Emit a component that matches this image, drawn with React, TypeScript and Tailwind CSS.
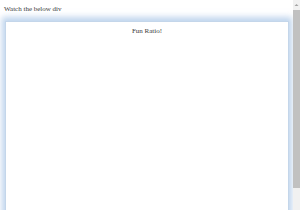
export default function App() {
  return (
    <div className="flex w-[300px] h-[210px] overflow-hidden bg-white" style={{ fontFamily: '"Liberation Serif", serif' }}>
      <div className="flex-1 flex flex-col min-w-0">
        <div className="pl-[4px] pt-[5px] text-[7px] leading-[8px] text-[#3a3a3a]">Watch the below div</div>
        <div className="mt-[8px] ml-[5px] mr-[4px] flex-1 bg-white border border-[#c4d6ea] shadow-[0_-1px_6px_3px_rgba(150,185,225,0.6)] mb-[-20px]">
          <div className="text-center text-[7px] leading-[8px] pt-[5px] text-[#3a3a3a]">Fun Ratio!</div>
        </div>
      </div>
      <div className="w-[7px] flex flex-col bg-[#f1f1f1]">
        <div className="h-[10px] flex items-center justify-center">
          <svg width="5" height="4" viewBox="0 0 5 4"><path d="M0.5 3 L2.5 1 L4.5 3 Z" fill="#a3a3a3" /></svg>
        </div>
        <div className="h-[178px] bg-[#c1c1c1]" />
      </div>
    </div>
  );
}
